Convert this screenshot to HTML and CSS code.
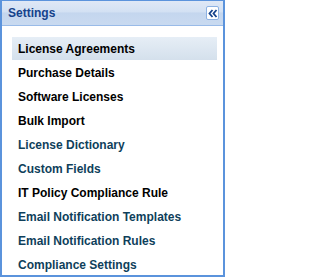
FILE: index.html
```html
<!DOCTYPE html>
<html>
<head>
<meta charset="utf-8">
<link rel="stylesheet" href="styles.css">
</head>
<body>
<div class="panel">
  <div class="header">
    <span class="title">Settings</span>
    <span class="collapse">
      <svg width="10" height="9" viewBox="0 0 10 9"><path d="M4.5 1 L1.5 4.5 L4.5 8 M8.5 1 L5.5 4.5 L8.5 8" fill="none" stroke="#15428b" stroke-width="1.8"/></svg>
    </span>
  </div>
  <ul class="menu">
    <li class="item active">License Agreements</li>
    <li class="item">Purchase Details</li>
    <li class="item">Software Licenses</li>
    <li class="item">Bulk Import</li>
    <li class="item link">License Dictionary</li>
    <li class="item link">Custom Fields</li>
    <li class="item">IT Policy Compliance Rule</li>
    <li class="item link">Email Notification Templates</li>
    <li class="item link">Email Notification Rules</li>
    <li class="item link">Compliance Settings</li>
  </ul>
</div>
</body>
</html>
```
FILE: styles.css
```css
html, body {
  margin: 0;
  padding: 0;
  background: #ffffff;
}
.panel {
  width: 225px;
  height: 277px;
  box-sizing: border-box;
  border: 1px solid #5b93dc;
  border-left-width: 2px;
  border-right-width: 2px;
  border-bottom-width: 2px;
  overflow: hidden;
  font-family: "Liberation Sans", Arial, sans-serif;
  font-weight: bold;
  font-size: 12px;
}
.header {
  height: 25px;
  box-sizing: border-box;
  display: flex;
  align-items: center;
  justify-content: space-between;
  padding: 0 4px 1px 6px;
  background: linear-gradient(to bottom, #dfe8f6 0%, #d3e1f3 45%, #c4d6ee 50%, #c9daf0 100%);
  border-bottom: 1px solid #99bbe8;
}
.title {
  color: #15428b;
  font-size: 12px;
}
.collapse {
  width: 11px;
  height: 12px;
  border: 1px solid #8db2e3;
  border-radius: 2px;
  background: #ffffff;
  display: flex;
  align-items: center;
  justify-content: center;
  margin-top: 1px;
}
.menu {
  list-style: none;
  margin: 0;
  padding: 11px 6px 0 10px;
}
.item {
  height: 24px;
  line-height: 25px;
  padding-left: 6px;
  color: #000000;
  white-space: nowrap;
}
.item.link {
  color: #0f3f5b;
}
.item.active {
  background: linear-gradient(to bottom, #e6eef6, #d4e0ec);
  height: 23px;
  margin-bottom: 1px;
}
```
